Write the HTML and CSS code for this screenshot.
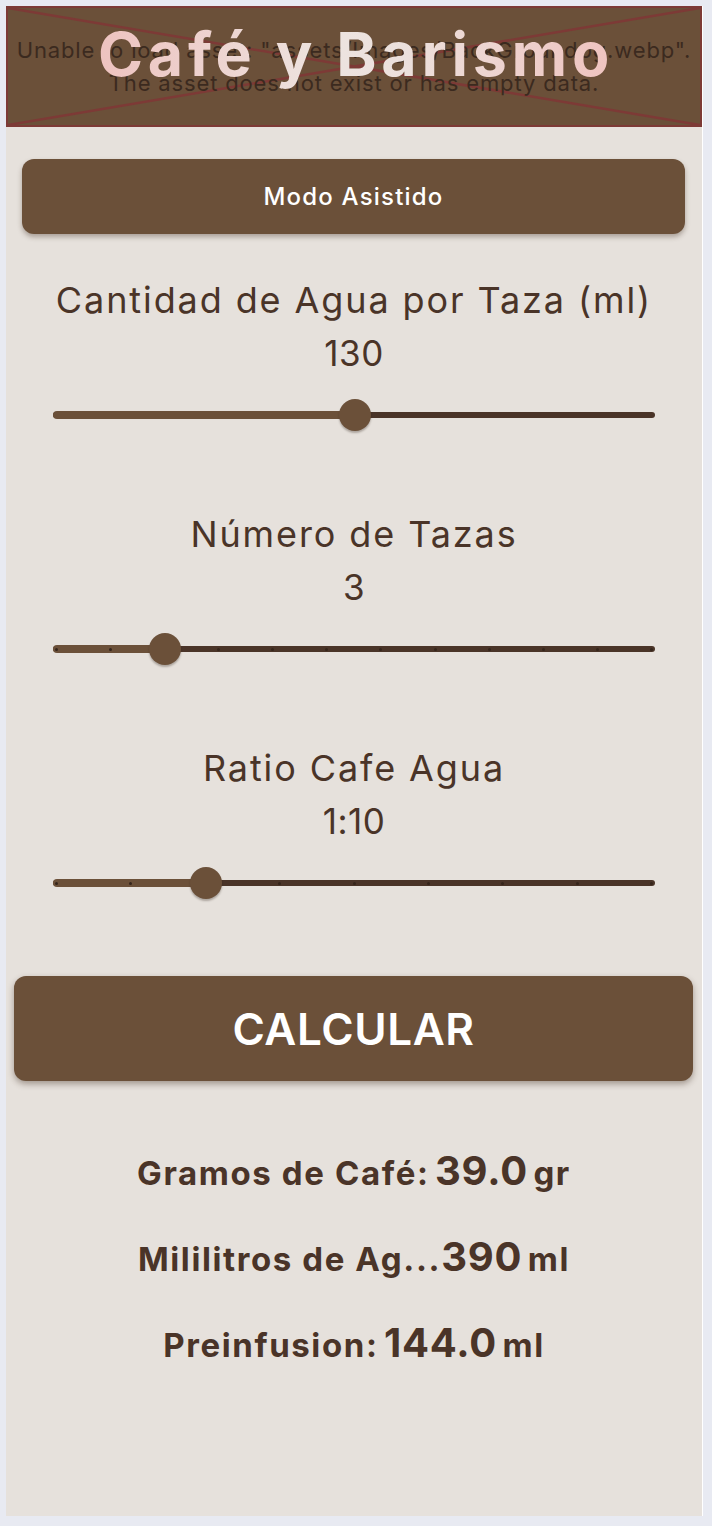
FILE: index.html
```html
<!DOCTYPE html>
<html lang="es">
<head>
<meta charset="utf-8">
<title>Café y Barismo</title>
<link rel="stylesheet" href="styles.css">
</head>
<body>
<div class="panel">
  <header class="hero">
    <svg class="hero-x" viewBox="0 0 100 100" preserveAspectRatio="none" aria-hidden="true">
      <line x1="0" y1="0" x2="100" y2="100" vector-effect="non-scaling-stroke"/>
      <line x1="100" y1="0" x2="0" y2="100" vector-effect="non-scaling-stroke"/>
    </svg>
    <p class="hero-error">Unable to load asset: "assets/Images/BackGroundpg.webp".<br>The asset does not exist or has empty data.</p>
    <h1 class="hero-title">Café y Barismo</h1>
  </header>

  <button class="mode-btn">Modo Asistido</button>

  <section class="field">
    <div class="field-label">Cantidad de Agua por Taza (ml)</div>
    <div class="field-value">130</div>
    <div class="slider">
      <div class="track">
        <div class="track-active" style="width: calc(4px + 0.502 * (100% - 8px));"></div>
      </div>
      <div class="thumb" style="left: calc(4px + 0.502 * (100% - 8px));"></div>
    </div>
  </section>

  <section class="field">
    <div class="field-label">Número de Tazas</div>
    <div class="field-value">3</div>
    <div class="slider">
      <div class="track">
        <div class="track-active" style="width: calc(4px + 0.1818 * (100% - 8px));"></div>
        <div class="ticks">
          <i></i><i></i><i></i><i></i><i></i><i></i><i></i><i></i><i></i><i></i><i></i><i></i>
        </div>
      </div>
      <div class="thumb" style="left: calc(4px + 0.1818 * (100% - 8px));"></div>
    </div>
  </section>

  <section class="field">
    <div class="field-label">Ratio Cafe Agua</div>
    <div class="field-value">1:10</div>
    <div class="slider">
      <div class="track">
        <div class="track-active" style="width: calc(4px + 0.25 * (100% - 8px));"></div>
        <div class="ticks">
          <i></i><i></i><i></i><i></i><i></i><i></i><i></i><i></i><i></i>
        </div>
      </div>
      <div class="thumb" style="left: calc(4px + 0.25 * (100% - 8px));"></div>
    </div>
  </section>

  <button class="calc-btn">CALCULAR</button>

  <div class="results">
    <div class="result"><span class="r-label">Gramos de Café:</span> <span class="r-num">39.0</span> <span class="r-unit">gr</span></div>
    <div class="result"><span class="r-label">Mililitros de Ag...</span><span class="r-num">390</span> <span class="r-unit">ml</span></div>
    <div class="result"><span class="r-label">Preinfusion:</span> <span class="r-num">144.0</span> <span class="r-unit">ml</span></div>
  </div>
</div>
</body>
</html>
```

FILE: styles.css
```css
* { box-sizing: border-box; }

html, body {
  margin: 0;
  padding: 0;
  background: #e8eaf2;
}

body {
  padding: 6px 0 0 6px;
  font-family: Inter, "Noto Sans", sans-serif;
  color: #4a3428;
}

.panel {
  width: 697px;
  height: 1510px;
  background: #e6e1dc;
  border-right: 1px solid #ffffff;
  box-shadow: 0 1px 0 #cfcdd3;
  display: flex;
  flex-direction: column;
}

/* ---------- header (broken image placeholder) ---------- */
.hero {
  position: relative;
  height: 121px;
  margin: 0;
  background: #6b5039;
  border: 2px solid #7d3a36;
  display: grid;
  place-items: center;
  overflow: hidden;
}

.hero > * { grid-area: 1 / 1; }

.hero-x {
  width: 100%;
  height: 100%;
  align-self: stretch;
  justify-self: stretch;
}
.hero-x line {
  stroke: #7d3a36;
  stroke-width: 2.5;
}

.hero-error {
  margin: 0;
  align-self: start;
  padding-top: 26px;
  text-align: center;
  white-space: nowrap;
  font-family: Inter, "Noto Sans", sans-serif;
  font-size: 22px;
  line-height: 33px;
  letter-spacing: 0.85px;
  color: #3b2a1f;
}

.hero-title {
  margin: 0;
  align-self: start;
  padding-top: 10px;
  font-family: Inter, "Noto Sans", sans-serif;
  font-weight: 700;
  font-size: 61px;
  line-height: 72px;
  letter-spacing: 4.7px;
  padding-left: 4px;
  background: linear-gradient(90deg, #eec2bf 0%, #ede4e0 45%, #ece0dc 60%, #efc3bf 100%);
  -webkit-background-clip: text;
  background-clip: text;
  color: transparent;
}

/* ---------- buttons ---------- */
.mode-btn {
  margin: 32px 17px 0 16px;
  height: 75px;
  border: none;
  border-radius: 12px;
  background: #6b5039;
  color: #ffffff;
  font-family: Inter, "Noto Sans", sans-serif;
  font-size: 24px;
  font-weight: 500;
  letter-spacing: 1.2px;
  box-shadow: 0 3px 5px rgba(60, 40, 25, 0.35);
}

.calc-btn {
  margin: 58px 9px 0 8px;
  height: 105px;
  border: none;
  border-radius: 12px;
  background: #6b5039;
  color: #ffffff;
  font-family: Inter, "Noto Sans", sans-serif;
  font-size: 44px;
  font-weight: 600;
  letter-spacing: 0.6px;
  box-shadow: 0 3px 6px rgba(60, 40, 25, 0.4);
}

/* ---------- sliders ---------- */
.field {
  display: flex;
  flex-direction: column;
  align-items: stretch;
  text-align: center;
  margin-bottom: 58px;
}
.field:first-of-type { margin-top: 40px; }
.field:last-of-type { margin-bottom: 0; }

.field-label {
  font-size: 36px;
  font-weight: 400;
  line-height: 53px;
  letter-spacing: 1.9px;
}

.field-value {
  font-size: 35px;
  font-weight: 400;
  line-height: 53px;
  letter-spacing: 0.5px;
}

.slider {
  position: relative;
  height: 70px;
  margin: 0 47px;
  display: flex;
  align-items: center;
}

.track {
  position: relative;
  flex: 1;
  height: 6px;
  border-radius: 3px;
  background: #4a3428;
  display: flex;
  align-items: center;
}

.track-active {
  position: absolute;
  left: 0;
  top: -1px;
  height: 8px;
  border-radius: 4px;
  background: #6b5039;
}

.ticks {
  position: relative;
  flex: 1;
  display: flex;
  justify-content: space-between;
  padding: 0 2px;
}
.ticks i {
  width: 3px;
  height: 3px;
  border-radius: 50%;
  background: #35251b;
}

.thumb {
  position: absolute;
  top: 50%;
  width: 32px;
  height: 32px;
  margin: -16px 0 0 -16px;
  border-radius: 50%;
  background: #6b5039;
  box-shadow: 0 2px 2px rgba(40, 25, 15, 0.3);
}

/* ---------- results ---------- */
.results {
  margin-top: 47px;
  display: flex;
  flex-direction: column;
}

.result {
  height: 86px;
  line-height: 86px;
  text-align: center;
  font-weight: 700;
  white-space: nowrap;
  letter-spacing: 1.6px;
}

.r-label { font-size: 33px; }
.r-num { font-size: 40px; letter-spacing: 0.8px; }
.r-unit { font-size: 33px; }
```
